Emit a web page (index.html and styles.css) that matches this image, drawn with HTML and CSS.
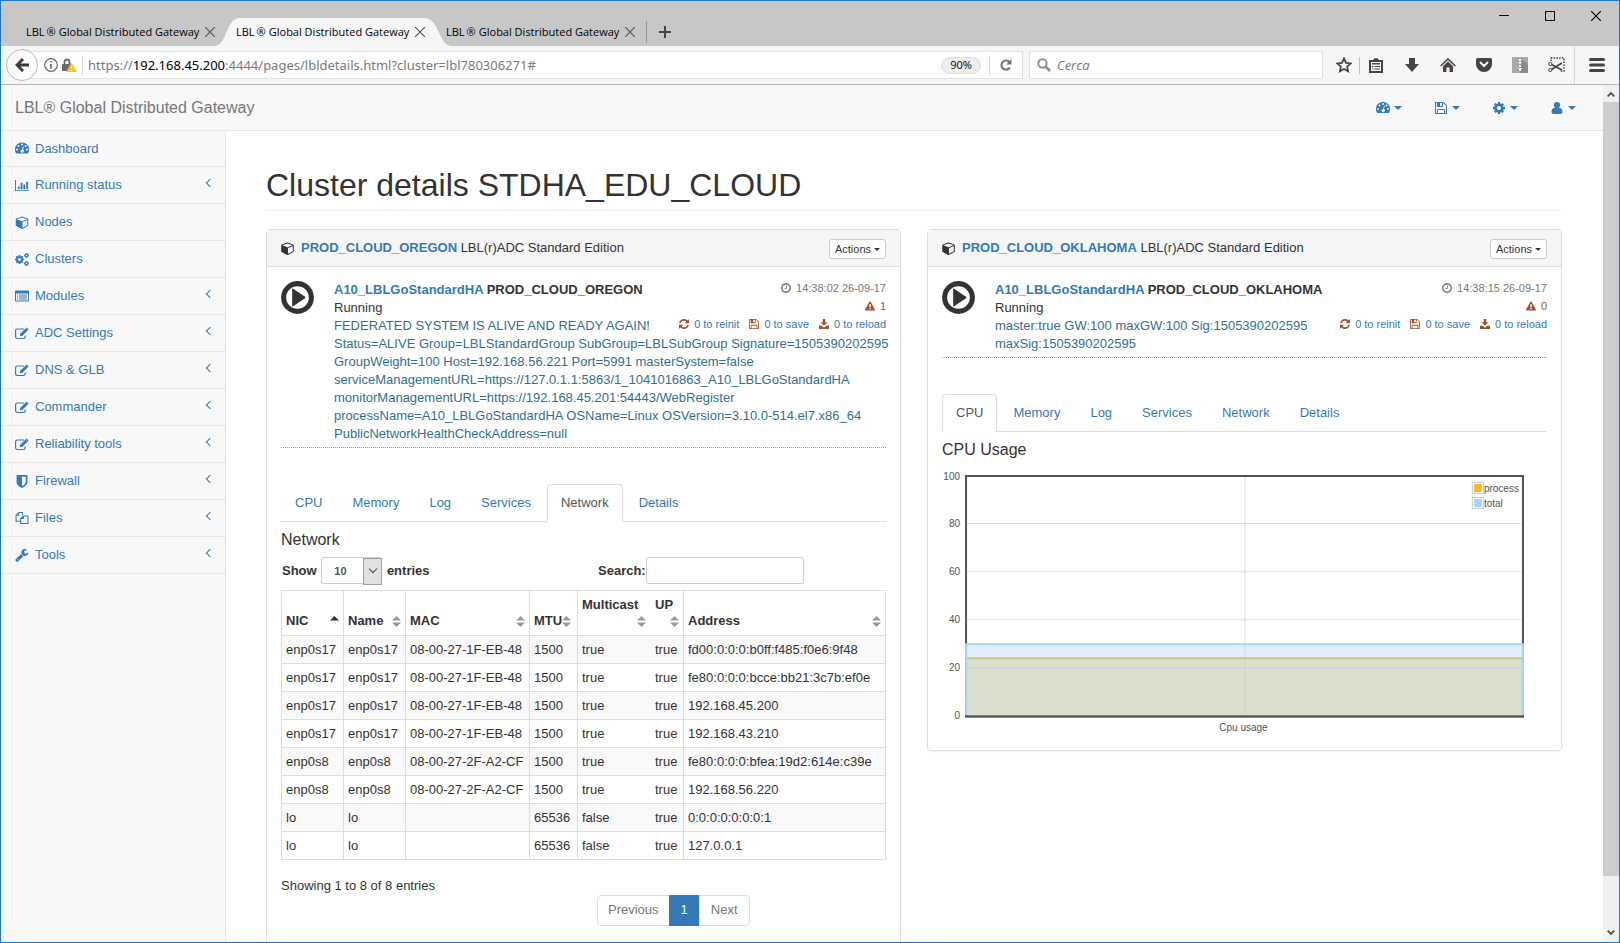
FILE: index.html
```html
<!DOCTYPE html>
<html lang="en">
<head>
<meta charset="utf-8">
<title>LBL® Global Distributed Gateway</title>
<link rel="stylesheet" href="styles.css">
</head>
<body>
<svg class="sprite" aria-hidden="true">
  <symbol id="i-gauge" viewBox="0 0 14 12"><path fill-rule="evenodd" d="M7 0a7 7 0 0 0-6 10.700q.2.300.6.300h10.800q.4 0 .6-.3A7 7 0 0 0 7 0zM2 6a1 1 0 1 1 0 2 1 1 0 0 1 0-2zM3.500 2.500a1 1 0 1 1 0 2 1 1 0 0 1 0-2zM7 1a1 1 0 1 1 0 2 1 1 0 0 1 0-2zM10.500 2.500a1 1 0 1 1 0 2 1 1 0 0 1 0-2zM12 6a1 1 0 1 1 0 2 1 1 0 0 1 0-2zM8 3.700l.8.200-.8 3.200a1.600 1.600 0 1 1-1-.2z"/></symbol>
  <symbol id="i-bars" viewBox="0 0 15 12"><path d="M0 0h1v11h14v1H0zM3 7h2v3H3zM6 3h2v7H6zM9 5h2v5H9zM12 2h2v8h-2z"/></symbol>
  <symbol id="i-cube" viewBox="0 64 1664 1728"><path d="M896 1629l640-349v-636l-640 233v752zm-64-865l698-254-698-254-698 254 698 254zm832-252v768q0 35-18 65t-49 47l-704 384q-28 16-61 16t-61-16l-704-384q-31-17-49-47t-18-65v-768q0-40 23-73t61-50l704-256q22-8 44-8t44 8l704 256q38 17 61 50t23 73z"/></symbol>
  <symbol id="i-gear" viewBox="128 128 1536 1536"><path d="M1152 896q0-106-75-181t-181-75-181 75-75 181 75 181 181 75 181-75 75-181zm512-109v222q0 12-8 23t-20 13l-185 28q-19 54-39 91 35 50 107 138 10 12 10 25t-9 23q-27 37-99 108t-94 71q-12 0-26-9l-138-108q-44 23-91 38-16 136-29 186-7 28-36 28h-222q-14 0-24.500-8.500t-11.500-21.500l-28-184q-49-16-90-37l-141 107q-10 9-25 9-14 0-25-11-126-114-165-168-7-10-7-23 0-12 8-23 15-21 51-66.500t54-70.500q-27-50-41-99l-183-27q-13-2-21-12.500t-8-23.500v-222q0-12 8-23t19-13l186-28q14-46 39-92-40-57-107-138-10-12-10-24 0-10 9-23 26-36 98.500-107.500t94.500-71.500q13 0 26 10l138 107q44-23 91-38 16-136 29-186 7-28 36-28h222q14 0 24.500 8.500t11.500 21.500l28 184q49 16 90 37l142-107q9-9 24-9 13 0 25 10 129 119 165 170 7 8 7 22 0 12-8 23-15 21-51 66.500t-54 70.500q26 50 41 98l183 28q13 2 21 12.500t8 23.500z"/></symbol>
  <symbol id="i-gears" viewBox="0 0 14 13"><use href="#i-gear" x="0" y="2" width="9" height="9"/><use href="#i-gear" x="9" y="0" width="5" height="5"/><use href="#i-gear" x="9" y="8" width="5" height="5"/></symbol>
  <symbol id="i-list" viewBox="0 0 14 12"><path fill-rule="evenodd" d="M1 0h12q1 0 1 1v9q0 1-1 1H1q-1 0-1-1V1q0-1 1-1zM1 3v7h12V3zM2 4h1v1H2zM4 4h8v1H4zM2 6h1v1H2zM4 6h8v1H4zM2 8h1v1H2zM4 8h8v1H4z"/></symbol>
  <symbol id="i-edit" viewBox="0 0 14 12"><path d="M9 1.500H2.300Q.6 1.500.6 3.200v6.100Q.6 11 2.300 11h6.200q1.700 0 1.700-1.700V8" fill="none" stroke="currentColor" stroke-width="1.200"/><path d="M5 6.400L10.500.9l2.200 2.200L7.200 8.600H5zM11 .4q.6-.6 1.200 0l1 1q.6.600 0 1.200l-.3.300L10.700.700z"/></symbol>
  <symbol id="i-shield" viewBox="256 128 1280 1536"><path d="M1344 960v-640h-448v1137q119-63 213-137 235-184 235-360zm192-768v768q0 86-33.500 170.500t-83 150-118 127.500-126.500 103-121 77.500-89.500 49.500-42.500 20q-12 6-26 6t-26-6q-16-7-42.500-20t-89.500-49.500-121-77.500-126.500-103-118-127.500-83-150-33.500-170.500v-768q0-26 19-45t45-19h1152q26 0 45 19t19 45z"/></symbol>
  <symbol id="i-files" viewBox="0 0 14 14"><path d="M3.500.6h4v3M3.500.6L.6 3.500V9.900h4.800M3.500.6v3H.6M8.500 4.200h4.900v8.200H5.600V7zM8.500 4.200V7H5.600" fill="none" stroke="currentColor" stroke-width="1.100"/></symbol>
  <symbol id="i-wrench" viewBox="64 128 1728 1664"><path d="M448 1472q0-26-19-45t-45-19-45 19-19 45 19 45 45 19 45-19 19-45zm644-420l-682 682q-37 37-90 37-52 0-91-37l-106-108q-38-36-38-90 0-53 38-91l681-681q39 98 114.500 173.500t173.500 114.500zm634-435q0 39-23 106-47 134-164.500 217.500t-258.500 83.500q-185 0-316.500-131.500t-131.500-316.500 131.500-316.500 316.500-131.500q58 0 121.500 16.500t107.500 46.500q16 11 16 28t-16 28l-293 169v224l193 107q5-3 79-48.500t135.500-81 70.500-35.500q15 0 23.500 10t8.500 25z"/></symbol>
  <symbol id="i-save" viewBox="128 128 1536 1536"><path d="M512 1536h768v-384h-768v384zm896 0h128v-896q0-14-10-38.500t-20-34.500l-281-281q-10-10-34-20t-39-10v416q0 40-28 68t-68 28h-576q-40 0-68-28t-28-68v-416h-128v1280h128v-416q0-40 28-68t68-28h832q40 0 68 28t28 68v416zm-384-928v-320q0-13-9.500-22.500t-22.500-9.500h-192q-13 0-22.500 9.500t-9.500 22.500v320q0 13 9.500 22.500t22.500 9.500h192q13 0 22.500-9.500t9.500-22.500zm640 32v928q0 40-28 68t-68 28h-1344q-40 0-68-28t-28-68v-1344q0-40 28-68t68-28h928q40 0 88 20t76 48l280 280q28 28 48 76t20 88z"/></symbol>
  <symbol id="i-refresh" viewBox="128 128 1536 1536"><path d="M1639 1056q0 5-1 7-64 268-268 434.500t-478 166.500q-146 0-282.500-55t-243.500-157l-129 129q-19 19-45 19t-45-19-19-45v-448q0-26 19-45t45-19h448q26 0 45 19t19 45-19 45l-137 137q71 66 161 102t187 36q134 0 250-65t186-179q11-17 53-117 8-23 30-23h192q13 0 22.500 9.500t9.500 22.500zm25-800v448q0 26-19 45t-45 19h-448q-26 0-45-19t-19-45 19-45l138-138q-148-137-349-137-134 0-250 65t-186 179q-11 17-53 117-8 23-30 23h-199q-13 0-22.500-9.500t-9.500-22.500v-7q65-268 270-434.500t480-166.500q146 0 284 55.500t245 156.500l130-129q19-19 45-19t45 19 19 45z"/></symbol>
  <symbol id="i-clock" viewBox="128 128 1536 1536"><path d="M1024 544v448q0 14-9 23t-23 9h-320q-14 0-23-9t-9-23v-64q0-14 9-23t23-9h224v-352q0-14 9-23t23-9h64q14 0 23 9t9 23zm416 352q0-148-73-273t-198-198-273-73-273 73-198 198-73 273 73 273 198 198 273 73 273-73 198-198 73-273zm224 0q0 209-103 385.500t-279.500 279.500-385.500 103-385.500-103-279.500-279.500-103-385.500 103-385.500 279.500-279.500 385.500-103 385.500 103 279.500 279.500 103 385.500z"/></symbol>
  <symbol id="i-warn" viewBox="0 0 12 11"><path fill-rule="evenodd" d="M5.200.5q.8-1 1.600 0l5 9.200q.4 1.300-.8 1.300H1q-1.200 0-.8-1.300zM5 3.400l.3 3.800h1.400L7 3.400zM5.200 8v1.500h1.600V8z"/></symbol>
  <symbol id="i-download" viewBox="0 0 12 12"><path d="M4.500 0h3v4H10L6 8 2 4h2.500zM0 8h3.300L6 10.500 8.700 8H12v4H0z"/></symbol>
  <symbol id="i-user" viewBox="0 0 11 12"><path d="M5.500 0a3 3 0 0 1 1.800 5.500Q11 6 11 10q0 2-2 2H2q-2 0-2-2 0-4 3.700-4.500A3 3 0 0 1 5.500 0z"/></symbol>
  <symbol id="i-play" viewBox="0 0 34 34"><circle cx="17" cy="17" r="14.300" fill="none" stroke="currentColor" stroke-width="5.200"/><path d="M11.500 8.500q0-1.200 1-.6l12.300 8.400q.9.700 0 1.400l-12.300 8.400q-1 .6-1-.6z"/></symbol>
  <symbol id="i-caret" viewBox="0 0 8 4"><path d="M0 0h8L4 4z"/></symbol>
  <symbol id="i-x" viewBox="0 0 10 10"><path d="M0 0l10 10M10 0L0 10" fill="none" stroke="currentColor" stroke-width="1.200"/></symbol>
  <symbol id="i-sort" viewBox="0 0 9 11"><path d="M4.500 0L9 4.500H0zM0 6.500h9L4.500 11z"/></symbol>
  <symbol id="i-asc" viewBox="0 0 9 11"><path d="M4.500 0L9 4.500H0z"/></symbol>
</svg>

<div class="window">
  <header class="tabstrip">
    <div class="tabs">
      <div class="tab"><span>LBL<small>®</small>Global Distributed Gateway</span><button aria-label="Close tab"><svg width="10" height="10"><use href="#i-x"/></svg></button></div>
      <div class="tab tab-active">
        <svg class="tab-shape" viewBox="0 0 238 28" preserveAspectRatio="none" aria-hidden="true"><path d="M0 28C14 28 11 0 26 0h184c16 0 14 28 28 28z"/></svg>
        <span>LBL<small>®</small>Global Distributed Gateway</span><button aria-label="Close tab"><svg width="10" height="10"><use href="#i-x"/></svg></button></div>
      <div class="tab"><span>LBL<small>®</small>Global Distributed Gateway</span><button aria-label="Close tab"><svg width="10" height="10"><use href="#i-x"/></svg></button></div>
      <button class="newtab" aria-label="New tab"><svg width="12" height="12" viewBox="0 0 12 12"><path d="M6 0v12M0 6h12" stroke="#4a4248" stroke-width="2"/></svg></button>
    </div>
    <div class="controls">
      <button aria-label="Minimize"><svg width="10" height="10" viewBox="0 0 10 10"><path d="M0 4.500h10" stroke="#000"/></svg></button>
      <button aria-label="Maximize"><svg width="10" height="10" viewBox="0 0 10 10"><path d="M.5.500h9v9h-9z" fill="none" stroke="#000"/></svg></button>
      <button aria-label="Close"><svg width="10" height="10"><use href="#i-x"/></svg></button>
    </div>
  </header>

  <nav class="navbar" aria-label="Browser">
    <button class="back" aria-label="Back"><svg width="15" height="14" viewBox="0 0 15 14"><path d="M8 1L2 7l6 6M2 7h12" fill="none" stroke="#403a40" stroke-width="3"/></svg></button>
    <div class="urlbox">
      <svg class="info" width="14" height="14" viewBox="0 0 14 14"><circle cx="7" cy="7" r="6.300" fill="none" stroke="#6a6a6a" stroke-width="1.200"/><path d="M6.200 3h1.600v1.600H6.200zM6.200 6h1.600v5H6.200z" fill="#6a6a6a"/></svg>
      <svg width="15" height="14" viewBox="0 0 15 14"><path d="M2.500 6V4a2.500 2.500 0 0 1 5 0v2" fill="none" stroke="#6a6a6a" stroke-width="1.800"/><path d="M0 6h9v7H0z" fill="#6a6a6a"/><path d="M9.500 4.500L15 14H4z" fill="#f5bf2e"/><path d="M9 8h1.200v3H9zM9 12h1.200v1H9z" fill="#fff"/></svg>
      <div class="url"><span>https://</span><b>192.168.45.200</b><span>:4444/pages/lbldetails.html?cluster=lbl780306271#</span></div>
      <button class="zoom">90%</button>
      <button class="reload" aria-label="Reload"><svg width="12" height="12" viewBox="0 0 12 12"><path d="M9.500 3A4.600 4.600 0 1 0 10 8.500" fill="none" stroke="#757575" stroke-width="2.200"/><path d="M11.500 0v5.500H6z" fill="#757575"/></svg></button>
    </div>
    <label class="searchbox">
      <svg width="14" height="14" viewBox="0 0 14 14"><circle cx="5.500" cy="5.500" r="4.200" fill="none" stroke="#8f8f8f" stroke-width="2"/><path d="M8.500 8.500l4.500 4.500" stroke="#8f8f8f" stroke-width="2.600"/></svg>
      <input type="text" placeholder="Cerca" aria-label="Cerca">
    </label>
    <div class="toolbar">
      <button class="star" aria-label="Bookmark"><svg width="16" height="16" viewBox="0 0 16 16"><path d="M8 1.500l2 4.300 4.700.6-3.500 3.200.9 4.700L8 12l-4.100 2.300.9-4.700L1.300 6.400 6 5.800z" fill="none" stroke="#4a4248" stroke-width="1.800"/></svg></button>
      <button aria-label="Library"><svg width="14" height="15" viewBox="0 0 14 15"><path d="M1 3h12v11H1z" fill="none" stroke="#4a4248" stroke-width="2"/><path d="M4 2q3-4 6 0zM3 5h8v1.500H3zM3 8h1.500v1H3zM5.500 8H11v1H5.500zM3 10.500h1.500v1H3zM5.500 10.500H11v1H5.500z" fill="#4a4248"/></svg></button>
      <button aria-label="Downloads"><svg width="14" height="14" viewBox="0 0 14 14"><path d="M4 0h6v6h4l-7 8-7-8h4z" fill="#4a4248"/></svg></button>
      <button aria-label="Home"><svg width="16" height="14" viewBox="0 0 16 14"><path d="M8 3.500l5 4.700V14H9.500V9.500h-3V14H3V8.200z" fill="#4a4248"/><path d="M.7 8L8 1l7.300 7" fill="none" stroke="#4a4248" stroke-width="1.600"/></svg></button>
      <button aria-label="Pocket"><svg width="16" height="14" viewBox="0 0 16 14"><path d="M1.500 0h13Q16 0 16 1.500V6A8 8 0 0 1 0 6V1.500Q0 0 1.500 0z" fill="#4a4248"/><path d="M4.500 4.500L8 8l3.500-3.500" fill="none" stroke="#f6f6f6" stroke-width="2" stroke-linecap="round"/></svg></button>
      <button aria-label="Archive"><svg width="16" height="16" viewBox="0 0 16 16"><path d="M0 0h16v16H0z" fill="#a8a8a8"/><path d="M10 3l6 4v9H9l-3-3z" fill="#8a8a8a"/><path d="M7 2h2v2H7zM6 5h4l-2 2.500zM7 8h2v2H7zM6 11h4v1H9v2H7v-2H6z" fill="#f6f6f6"/></svg></button>
      <button aria-label="Screenshot"><svg width="17" height="16" viewBox="0 0 17 16"><path d="M3 4V1h13v13h-4" fill="none" stroke="#4a4248" stroke-width="1.500" stroke-dasharray="1.500 1.300"/><path d="M3.500 7.500L14 13M3.500 12.500L14 6" stroke="#4a4248" stroke-width="1.600"/><circle cx="2.300" cy="7" r="1.600" fill="none" stroke="#4a4248"/><circle cx="2.300" cy="13" r="1.600" fill="none" stroke="#4a4248"/></svg></button>
    </div>
    <button class="burger" aria-label="Menu"><svg width="16" height="14" viewBox="0 0 16 14"><path d="M1.500 1.500h13M1.500 7h13M1.500 12.500h13" stroke="#4a4248" stroke-width="3" stroke-linecap="round"/></svg></button>
  </nav>

  <div class="viewport">
    <div class="page">
      <header class="topbar">
        <a class="brand" href="#">LBL® Global Distributed Gateway</a>
        <div class="topmenu">
          <button aria-label="Dashboard"><svg width="14" height="12"><use href="#i-gauge"/></svg><svg width="8" height="4"><use href="#i-caret"/></svg></button>
          <button aria-label="Save"><svg width="14" height="12"><use href="#i-save"/></svg><svg width="8" height="4"><use href="#i-caret"/></svg></button>
          <button aria-label="Settings"><svg width="14" height="12"><use href="#i-gear"/></svg><svg width="8" height="4"><use href="#i-caret"/></svg></button>
          <button aria-label="User"><svg width="14" height="12"><use href="#i-user"/></svg><svg width="8" height="4"><use href="#i-caret"/></svg></button>
        </div>
      </header>
      <div class="columns">
        <nav class="sidebar" aria-label="Main">
          <ul>
            <li><a href="#"><svg class="mi"><use href="#i-gauge"/></svg>Dashboard</a></li>
            <li><a class="sub" href="#"><svg class="mi"><use href="#i-bars"/></svg>Running status</a></li>
            <li><a href="#"><svg class="mi"><use href="#i-cube"/></svg>Nodes</a></li>
            <li><a href="#"><svg class="mi"><use href="#i-gears"/></svg>Clusters</a></li>
            <li><a class="sub" href="#"><svg class="mi"><use href="#i-list"/></svg>Modules</a></li>
            <li><a class="sub" href="#"><svg class="mi"><use href="#i-edit"/></svg>ADC Settings</a></li>
            <li><a class="sub" href="#"><svg class="mi"><use href="#i-edit"/></svg>DNS &amp; GLB</a></li>
            <li><a class="sub" href="#"><svg class="mi"><use href="#i-edit"/></svg>Commander</a></li>
            <li><a class="sub" href="#"><svg class="mi"><use href="#i-edit"/></svg>Reliability tools</a></li>
            <li><a class="sub" href="#"><svg class="mi"><use href="#i-shield"/></svg>Firewall</a></li>
            <li><a class="sub" href="#"><svg class="mi"><use href="#i-files"/></svg>Files</a></li>
            <li><a class="sub" href="#"><svg class="mi"><use href="#i-wrench"/></svg>Tools</a></li>
          </ul>
        </nav>

        <main class="content">
          <h1>Cluster details STDHA_EDU_CLOUD</h1>
          <div class="panels">
            <section class="panel">
              <div class="panel-head">
                <svg class="cube"><use href="#i-cube"/></svg>
                <div><a href="#"><b>PROD_CLOUD_OREGON</b></a> LBL(r)ADC Standard Edition</div>
                <button class="actions">Actions <svg width="6" height="3"><use href="#i-caret"/></svg></button>
              </div>
              <div class="panel-body">
                <div class="status">
                  <svg class="play"><use href="#i-play"/></svg>
                  <div class="status-text">
                    <div class="meta">
                      <div><svg class="si"><use href="#i-clock"/></svg>14:38:02 26-09-17</div>
                      <div><svg class="si brown"><use href="#i-warn"/></svg><span class="brown">1</span></div>
                      <div class="todo"><a href="#"><svg class="si brown"><use href="#i-refresh"/></svg>0 to reinit</a><a href="#"><svg class="si brown"><use href="#i-save"/></svg>0 to save</a><a href="#"><svg class="si brown"><use href="#i-download"/></svg>0 to reload</a></div>
                    </div>
                    <b><a href="#">A10_LBLGoStandardHA</a> PROD_CLOUD_OREGON</b>
                    <p>Running</p>
                    <p class="detail"><span>FEDERATED SYSTEM IS ALIVE AND READY AGAIN!</span><br><span>Status=ALIVE Group=LBLStandardGroup SubGroup=LBLSubGroup Signature=1505390202595</span><br><span>GroupWeight=100 Host=192.168.56.221 Port=5991 masterSystem=false</span><br><span>serviceManagementURL=https://127.0.1.1:5863/1_1041016863_A10_LBLGoStandardHA</span><br><span>monitorManagementURL=https://192.168.45.201:54443/WebRegister</span><br><span>processName=A10_LBLGoStandardHA OSName=Linux OSVersion=3.10.0-514.el7.x86_64</span><br><span>PublicNetworkHealthCheckAddress=null</span></p>
                  </div>
                </div>
                <div class="navtabs">
                  <a href="#">CPU</a><a href="#">Memory</a><a href="#">Log</a><a href="#">Services</a><a class="on" href="#">Network</a><a href="#">Details</a>
                </div>
                <h4>Network</h4>
                <div class="filters">
                  <label>Show <span class="selectwrap"><select><option>10</option></select></span> entries</label>
                  <label>Search:<input type="search"></label>
                </div>
                <table>
                  <colgroup><col class="c1"><col class="c1"><col class="c3"><col class="c4"><col class="c5"><col class="c6"><col></colgroup>
                  <thead><tr>
                    <th><div><span>NIC</span><svg class="sort asc"><use href="#i-asc"/></svg></div></th>
                    <th><div><span>Name</span><svg class="sort"><use href="#i-sort"/></svg></div></th>
                    <th><div><span>MAC</span><svg class="sort"><use href="#i-sort"/></svg></div></th>
                    <th class="tight"><div><span>MTU</span><svg class="sort"><use href="#i-sort"/></svg></div></th>
                    <th class="open stack"><div><span>Multicast</span><svg class="sort"><use href="#i-sort"/></svg></div></th>
                    <th class="stack"><div><span>UP</span><svg class="sort"><use href="#i-sort"/></svg></div></th>
                    <th><div><span>Address</span><svg class="sort"><use href="#i-sort"/></svg></div></th>
                  </tr></thead>
                  <tbody>
                    <tr><td>enp0s17</td><td>enp0s17</td><td>08-00-27-1F-EB-48</td><td>1500</td><td class="open">true</td><td>true</td><td>fd00:0:0:0:b0ff:f485:f0e6:9f48</td></tr>
                    <tr><td>enp0s17</td><td>enp0s17</td><td>08-00-27-1F-EB-48</td><td>1500</td><td class="open">true</td><td>true</td><td>fe80:0:0:0:bcce:bb21:3c7b:ef0e</td></tr>
                    <tr><td>enp0s17</td><td>enp0s17</td><td>08-00-27-1F-EB-48</td><td>1500</td><td class="open">true</td><td>true</td><td>192.168.45.200</td></tr>
                    <tr><td>enp0s17</td><td>enp0s17</td><td>08-00-27-1F-EB-48</td><td>1500</td><td class="open">true</td><td>true</td><td>192.168.43.210</td></tr>
                    <tr><td>enp0s8</td><td>enp0s8</td><td>08-00-27-2F-A2-CF</td><td>1500</td><td class="open">true</td><td>true</td><td>fe80:0:0:0:bfea:19d2:614e:c39e</td></tr>
                    <tr><td>enp0s8</td><td>enp0s8</td><td>08-00-27-2F-A2-CF</td><td>1500</td><td class="open">true</td><td>true</td><td>192.168.56.220</td></tr>
                    <tr><td>lo</td><td>lo</td><td></td><td>65536</td><td class="open">false</td><td>true</td><td>0:0:0:0:0:0:0:1</td></tr>
                    <tr><td>lo</td><td>lo</td><td></td><td>65536</td><td class="open">false</td><td>true</td><td>127.0.0.1</td></tr>
                  </tbody>
                </table>
                <p class="showing">Showing 1 to 8 of 8 entries</p>
                <div class="pager"><a href="#">Previous</a><a class="on" href="#">1</a><a href="#">Next</a></div>
              </div>
            </section>

            <section class="panel">
              <div class="panel-head">
                <svg class="cube"><use href="#i-cube"/></svg>
                <div><a href="#"><b>PROD_CLOUD_OKLAHOMA</b></a> LBL(r)ADC Standard Edition</div>
                <button class="actions">Actions <svg width="6" height="3"><use href="#i-caret"/></svg></button>
              </div>
              <div class="panel-body">
                <div class="status">
                  <svg class="play"><use href="#i-play"/></svg>
                  <div class="status-text">
                    <div class="meta">
                      <div><svg class="si"><use href="#i-clock"/></svg>14:38:15 26-09-17</div>
                      <div><svg class="si brown"><use href="#i-warn"/></svg><span class="brown">0</span></div>
                      <div class="todo"><a href="#"><svg class="si brown"><use href="#i-refresh"/></svg>0 to reinit</a><a href="#"><svg class="si brown"><use href="#i-save"/></svg>0 to save</a><a href="#"><svg class="si brown"><use href="#i-download"/></svg>0 to reload</a></div>
                    </div>
                    <b><a href="#">A10_LBLGoStandardHA</a> PROD_CLOUD_OKLAHOMA</b>
                    <p>Running</p>
                    <p class="detail"><span>master:true GW:100 maxGW:100 Sig:1505390202595</span><br><span>maxSig:1505390202595</span></p>
                  </div>
                </div>
                <div class="navtabs">
                  <a class="on" href="#">CPU</a><a href="#">Memory</a><a href="#">Log</a><a href="#">Services</a><a href="#">Network</a><a href="#">Details</a>
                </div>
                <h4>CPU Usage</h4>
                <svg class="chart" viewBox="1 4 604 269" role="img" aria-label="Cpu usage chart">
                  <path d="M25 60.500h556M25 108.500h556M25 156.500h556M25 204.500h556M303.500 13v240" stroke="#dedede"/>
                  <rect x="25" y="13" width="556" height="240" fill="none" stroke="#545454" stroke-width="2"/>
                  <path d="M25 195h556v57H25z" fill="#edc240" fill-opacity=".4"/>
                  <path d="M25 195h556" stroke="#edb02e" stroke-width="2"/>
                  <path d="M25 181h556v71H25z" fill="#afd8f8" fill-opacity=".4"/>
                  <path d="M25 252V181h556v71" fill="none" stroke="#a5d6f8" stroke-width="2"/>
                  <path d="M24 253h558" stroke="#545454" stroke-width="2"/>
                  <g class="axis" text-anchor="end"><text x="19" y="17">100</text><text x="19" y="64">80</text><text x="19" y="112">60</text><text x="19" y="160">40</text><text x="19" y="208">20</text><text x="19" y="256">0</text></g>
                  <text class="axis" x="302" y="268" text-anchor="middle">Cpu usage</text>
                  <path d="M530.500 19.500h11v11h-11zM530.500 34.500h11v11h-11z" fill="#fff" stroke="#ccc"/>
                  <path d="M532 21h8v8h-8z" fill="#f6ba2a"/><path d="M532 36h8v8h-8z" fill="#a5d6f8"/>
                  <text class="axis" x="542" y="29">process</text><text class="axis" x="542" y="44">total</text>
                </svg>
              </div>
            </section>
          </div>
        </main>
      </div>
    </div>
    <div class="scroll" aria-hidden="true">
      <svg width="8" height="5" viewBox="0 0 8 5"><path d="M.7 4.300L4 1l3.300 3.300" fill="none" stroke="#505050" stroke-width="1.800"/></svg>
      <div class="track"><div class="thumb"></div></div>
      <svg width="8" height="5" viewBox="0 0 8 5"><path d="M.7.700L4 4 7.300.700" fill="none" stroke="#505050" stroke-width="1.800"/></svg>
    </div>
  </div>
</div>
</body>
</html>
```

FILE: styles.css
```css
* { box-sizing: border-box; }
body { margin: 0; font: 13px/18px "Liberation Sans", Arial, sans-serif; color: #333; background: #fff; }
a { color: #337ab7; text-decoration: none; }
p, h1, h4, ul { margin: 0; padding: 0; }
svg { fill: currentColor; flex: none; }
button { border: 0; padding: 0; background: none; font: inherit; color: inherit; display: flex; align-items: center; justify-content: center; }
.sprite { position: absolute; width: 0; height: 0; }
.window { height: 100vh; display: flex; flex-direction: column; border: 1px solid #1979ca; overflow: hidden; }

/* browser chrome */
.tabstrip { flex: none; height: 45px; display: flex; justify-content: space-between; background: #c7c7c7; font: 11px/18px "Open Sans", "Noto Sans", sans-serif; color: #000; }
.tabs { display: flex; align-items: flex-end; padding-left: 15px; }
.tab { position: relative; width: 210px; height: 28px; display: flex; align-items: center; gap: 6px; padding-left: 10px; white-space: nowrap; }
.tab > span, .tab > button { position: relative; }
.tab > span { width: 173px; }
.tab small { font-size: 11px; margin: 0 3px 0 2px; }
.tab button { color: #555; }
.tab-shape { position: absolute; left: -12px; top: 0; width: 238px; height: 28px; fill: #f6f6f6; }
.newtab { width: 36px; height: 22px; margin-bottom: 3px; border-left: 1px solid #949494; }
.controls { display: flex; align-items: flex-start; gap: 36px; padding: 10px 18px 0 0; }

.navbar { flex: none; height: 39px; display: flex; align-items: center; background: #f6f6f6; border-bottom: 1px solid #b6b6b6; font: 13px/20px "Noto Sans", "Open Sans", sans-serif; }
.back { position: relative; width: 32px; height: 32px; margin-left: 5px; flex: none; border: 1px solid #bdbdbd; border-radius: 50%; background: #fbfbfb; }
.urlbox { flex: 1; min-width: 0; height: 28px; margin-left: -16px; display: flex; align-items: center; background: #fff; border: 1px solid #e2e2e2; }
.info { margin: 0 4px 0 21px; }
.url { flex: 1; min-width: 0; margin-left: 5px; padding-left: 5px; border-left: 1px solid #d9d9d9; color: #7a7a7a; white-space: nowrap; overflow: hidden; }
.url b { font-weight: 400; color: #000; }
.zoom { width: 40px; height: 17px; border: 1px solid #dedede; border-radius: 9px; background: #eee; color: #111; font-size: 11px; }
.reload { width: 33px; height: 20px; margin-left: 8px; border-left: 1px solid #d9d9d9; }
.searchbox { width: 294px; height: 28px; margin-left: 6px; padding-left: 7px; display: flex; align-items: center; gap: 6px; background: #fff; border: 1px solid #e2e2e2; }
.searchbox input { flex: 1; min-width: 0; padding: 0; border: 0; background: none; font: italic 13px/20px "Open Sans", "Noto Sans", sans-serif; }
.searchbox input::placeholder { color: #757575; opacity: 1; }
.toolbar { display: flex; align-items: center; margin-left: 5px; }
.toolbar button { width: 36px; height: 17px; }
.toolbar .star { width: 32px; border-right: 1px solid #c4c4c4; }
.toolbar button:nth-child(2) { width: 32px; margin-right: 2px; }
.burger { width: 45px; height: 38px; border-left: 1px solid #d5d5d5; }

/* page */
.viewport { flex: 1; min-height: 0; display: flex; }
.page { flex: 1; min-width: 0; display: flex; flex-direction: column; overflow: hidden; }
.topbar { flex: none; height: 46px; display: flex; align-items: center; justify-content: space-between; padding: 0 27px 0 14px; background: #f8f8f8; border-bottom: 1px solid #e7e7e7; }
.brand { font-size: 16px; color: #777; }
.topmenu { display: flex; gap: 32px; color: #337ab7; }
.topmenu button { gap: 4px; }
.columns { flex: 1; min-height: 0; display: flex; }
.sidebar { flex: none; width: 225px; background: #f8f8f8; border-right: 1px solid #e7e7e7; }
.sidebar ul { list-style: none; }
.sidebar li { border-bottom: 1px solid #e7e7e7; }
.sidebar a { display: flex; align-items: center; height: 36px; padding: 0 12px 0 14px; gap: 6px; }
.sidebar li:first-child a { height: 35px; }
.mi { width: 14px; height: 13px; }
.sub::after { content: ""; width: 5px; height: 5px; margin: 0 0 4px auto; border-left: 1px solid #337ab7; border-bottom: 1px solid #337ab7; transform: rotate(45deg); }
.content { flex: 1; min-width: 0; padding: 36px 41px 0 40px; }
h1 { font-weight: 500; font-size: 32px; line-height: 37px; padding-bottom: 6px; border-bottom: 1px solid #eee; }
.panels { display: grid; grid-template-columns: 1fr 1fr; gap: 26px; align-items: start; margin-top: 18px; }
.panel { min-width: 0; border: 1px solid #ddd; border-radius: 4px; box-shadow: 0 1px 1px rgba(0, 0, 0, .05); }
.panel:first-child { min-height: 740px; }
.panel-head { height: 37px; display: flex; align-items: center; gap: 7px; padding: 0 14px; background: #f5f5f5; border-bottom: 1px solid #ddd; }
.cube { width: 13px; height: 13px; }
.actions { margin: 2px 0 0 auto; gap: 3px; height: 20px; padding: 0 5px; border: 1px solid #ccc; border-radius: 3px; background: #fff; font-size: 11px; }
.panel-body { padding: 14px; }
.status { display: flex; gap: 20px; padding-bottom: 4px; border-bottom: 1px dotted #999; }
.play { width: 33px; height: 33px; }
.status-text { flex: 1; min-width: 0; }
.detail { color: #31708f; white-space: nowrap; }
.meta { float: right; margin-top: -2px; font-size: 11px; text-align: right; color: #777; }
.meta > div { display: flex; align-items: center; justify-content: flex-end; gap: 5px; height: 18px; }
.meta .todo { gap: 10px; }
.todo a { display: flex; align-items: center; gap: 5px; }
.si { width: 10px; height: 10px; }
.brown { color: #a0522d; }
.navtabs { display: flex; gap: 2px; margin-top: 36px; border-bottom: 1px solid #ddd; }
.navtabs a { height: 38px; margin-bottom: -1px; padding: 9px 13px; border: 1px solid transparent; border-radius: 4px 4px 0 0; }
.navtabs .on { color: #555; background: #fff; border-color: #ddd #ddd #fff; }
h4 { font-weight: 500; font-size: 16px; line-height: 18px; margin: 9px 0 8px; }
.filters { display: flex; padding-left: 1px; font-weight: 700; }
.filters label { width: 316px; display: flex; align-items: center; white-space: pre; }
.filters label:last-child { width: auto; }
.filters select { appearance: none; width: 61px; height: 27px; padding: 0 12px; border: 1px solid #ccc; border-radius: 3px; background: #fff; font: 700 11px/18px "Liberation Sans", Arial, sans-serif; color: #555; }
.selectwrap { position: relative; display: flex; margin: 0 1px; }
.selectwrap::before { content: ""; position: absolute; right: 0; top: 1px; width: 17px; height: 25px; border: 1px solid #a0a0a0; background: #e1e1e1; pointer-events: none; }
.selectwrap::after { content: ""; position: absolute; right: 6px; top: 9px; width: 5px; height: 5px; border: solid #444; border-width: 0 1px 1px 0; transform: rotate(45deg); pointer-events: none; }
.filters input { width: 158px; height: 27px; border: 1px solid #ccc; border-radius: 3px; background: #fff; }
table { width: 100%; margin-top: 6px; table-layout: fixed; border-collapse: collapse; border: 1px solid #ddd; }
.c1 { width: 62px; } .c3 { width: 124px; } .c4 { width: 48px; } .c5 { width: 73px; } .c6 { width: 33px; }
th, td { height: 28px; padding: 0 4px; text-align: left; border: 1px solid #ddd; white-space: nowrap; }
th { height: 45px; vertical-align: bottom; padding: 0 4px 5px; }
.open { border-right-color: transparent; }
th div { display: flex; align-items: center; justify-content: space-between; }
.tight { padding-right: 0; }
.tight div { justify-content: flex-start; }
.stack div { flex-direction: column; align-items: flex-start; gap: 2px; }
.stack .sort { align-self: flex-end; margin-bottom: 3px; }
.sort { width: 9px; height: 11px; color: #999; }
.asc { color: #333; }
tbody tr:nth-child(odd) { background: #f9f9f9; }
.showing { margin-top: 17px; }
.pager { display: flex; margin-left: 316px; }
.pager a { height: 31px; padding: 5px 10px; margin-left: -1px; border: 1px solid #ddd; background: #fff; color: #777; }
.pager a:first-child { margin-left: 0; border-radius: 4px 0 0 4px; }
.pager a:last-child { padding: 5px 11px; border-radius: 0 4px 4px 0; }
.pager .on { padding: 5px 11px; background: #337ab7; border-color: #337ab7; color: #fff; }
.chart { display: block; width: 100%; overflow: visible; }
.axis { font-size: 10px; fill: #545454; }
.scroll { flex: none; width: 16px; display: flex; flex-direction: column; align-items: center; padding: 7px 0; gap: 5px; background: #f0f0f0; }
.track { flex: 1; align-self: stretch; }
.thumb { height: 94%; background: #cdcdcd; }
```
